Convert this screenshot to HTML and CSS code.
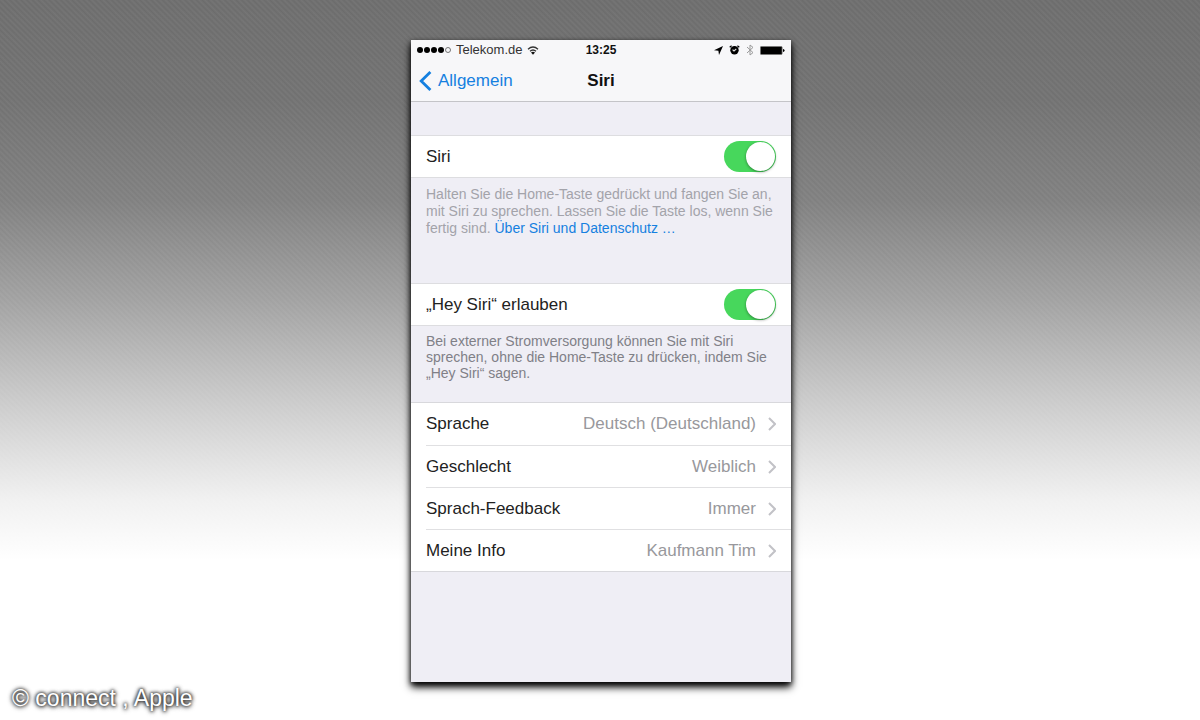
FILE: index.html
```html
<!DOCTYPE html>
<html lang="de">
<head>
    <meta charset="utf-8">
    <title>Siri</title>
    <link rel="stylesheet" href="styles.css">
</head>
<body>
    <main class="phone">
        <header class="topbar">
            <div class="status">
                <div class="status-left">
                    <svg class="signal" width="35" height="8" viewBox="0 0 35 8">
                        <circle cx="3" cy="4" r="3"/>
                        <circle cx="10" cy="4" r="3"/>
                        <circle cx="17" cy="4" r="3"/>
                        <circle cx="24" cy="4" r="3"/>
                        <circle cx="31" cy="4" r="2.5" fill="none" stroke="#555" stroke-width=".8"/>
                    </svg>
                    <span class="carrier">Telekom.de</span>
                    <svg width="12" height="9" viewBox="0 0 12 9" fill="none" stroke="#333" stroke-width="1.3">
                        <path d="M1 3.2Q6 -1.2 11 3.2M3 5.3Q6 2.6 9 5.3"/>
                        <path d="M4 6.4Q6 5 8 6.4L6 8.8Z" fill="#111" stroke="none"/>
                    </svg>
                </div>
                <time class="clock">13:25</time>
                <div class="status-right">
                    <svg width="9" height="9" viewBox="0 0 9 9"><path d="M9 0L5 9L4.4 4.7L0 4.2Z"/></svg>
                    <svg width="11" height="10" viewBox="0 0 11 10">
                        <circle cx="5.5" cy="5.3" r="4.2"/>
                        <path d="M.7 2.2L2.6 .7M10.3 2.2L8.4 .7" stroke="#000" stroke-width="1.2"/>
                        <path d="M5 6L7.3 3.8M5 6L3.6 4.6" stroke="#ddd" stroke-width="1.1"/>
                    </svg>
                    <svg width="8" height="12" viewBox="0 0 8 12" fill="none" stroke="#999" stroke-width="1"><path d="M1 3L7 8.6L4 11V1L7 3.4L1 9"/></svg>
                    <svg width="25" height="9" viewBox="0 0 25 9">
                        <rect x=".4" y=".4" width="21.7" height="8.2" rx="1" fill="#000" stroke="#777" stroke-width=".8"/>
                        <path d="M23 3Q24.6 3.2 24.6 4.5T23 6Z"/>
                    </svg>
                </div>
            </div>
            <nav class="nav">
                <a class="back" href="#">
                    <svg width="13" height="20" viewBox="0 0 13 20" fill="none" stroke="#1580e0" stroke-width="2.8"><path d="M11.4 1L2.2 10L11.4 19"/></svg>
                    Allgemein
                </a>
                <h1>Siri</h1>
            </nav>
        </header>

        <section class="group">
            <div class="row">
                <label for="siri">Siri</label>
                <input class="switch" type="checkbox" id="siri" checked>
            </div>
            <p class="hint hint-light">Halten Sie die Home-Taste gedrückt und fangen Sie an, mit Siri zu sprechen. Lassen Sie die Taste los, wenn Sie fertig sind. <a href="#">Über Siri und Datenschutz …</a></p>
        </section>

        <section class="group">
            <div class="row">
                <label for="hey-siri">„Hey Siri“ erlauben</label>
                <input class="switch" type="checkbox" id="hey-siri" checked>
            </div>
            <p class="hint">Bei externer Stromversorgung können Sie mit Siri sprechen, ohne die Home-Taste zu drücken, indem Sie „Hey Siri“ sagen.</p>
        </section>

        <section class="list">
            <a class="item" href="#">
                <span>Sprache</span>
                <span class="value">Deutsch (Deutschland)</span>
                <svg class="chevron" width="8" height="14" viewBox="0 0 8 14"><path d="M1 1L7 7L1 13"/></svg>
            </a>
            <a class="item" href="#">
                <span>Geschlecht</span>
                <span class="value">Weiblich</span>
                <svg class="chevron" width="8" height="14" viewBox="0 0 8 14"><path d="M1 1L7 7L1 13"/></svg>
            </a>
            <a class="item" href="#">
                <span>Sprach-Feedback</span>
                <span class="value">Immer</span>
                <svg class="chevron" width="8" height="14" viewBox="0 0 8 14"><path d="M1 1L7 7L1 13"/></svg>
            </a>
            <a class="item" href="#">
                <span>Meine Info</span>
                <span class="value">Kaufmann Tim</span>
                <svg class="chevron" width="8" height="14" viewBox="0 0 8 14"><path d="M1 1L7 7L1 13"/></svg>
            </a>
        </section>
    </main>
    <div class="credit">© connect , Apple</div>
</body>
</html>
```
FILE: styles.css
```css
* {
    box-sizing: border-box;
}
body {
    margin: 0;
    min-height: 100vh;
    padding: 40px 0 38px 2px;
    font-family: "Liberation Sans", Arial, sans-serif;
    font-size: 17px;
    color: #222;
    /* fine diagonal weave that fades out with the grey */
    background:
        linear-gradient(rgba(255,255,255,0) 0, rgba(255,255,255,0.03) 100px, rgba(255,255,255,0.13) 200px, rgba(255,255,255,0.36) 300px, rgba(255,255,255,0.64) 400px, rgba(255,255,255,0.9) 500px, #fff 560px),
        repeating-linear-gradient(45deg, #6c6c6c 0, #757575 2px, #6c6c6c 4px);
}
a {
    color: #1580e0;
    text-decoration: none;
}
.phone {
    width: 380px;
    max-width: 100%;
    min-height: 642px;
    margin: 0 auto;
    background: #efeef5;
    box-shadow: 0 5px 8px #000, 0 2px 5px rgba(0,0,0,0.7);
}

/* status bar and navigation */
.topbar {
    background: #f7f7f9;
    border-bottom: 1px solid #c4c4c8;
}
.status {
    display: grid;
    grid-template-columns: 1fr auto 1fr;
    align-items: center;
    height: 20px;
    padding: 0 6px;
    font-size: 12px;
    color: #111;
}
.status-left,
.status-right {
    display: flex;
    align-items: center;
}
.status-right {
    justify-content: flex-end;
    gap: 6px;
}
.carrier {
    margin: 0 5px 0 4px;
    font-size: 13px;
    line-height: 16px;
    color: #333;
}
.clock {
    font-weight: bold;
}
.nav {
    display: grid;
    grid-template-columns: 1fr auto 1fr;
    align-items: center;
    height: 41px;
    padding: 0 8px;
}
.back {
    display: flex;
    align-items: center;
    gap: 6px;
}
.nav h1 {
    margin: 0;
    font-size: 17px;
    color: #111;
}

/* switches with their explanation */
.group {
    height: 148px;
    padding-top: 33px;
}
.row {
    display: flex;
    align-items: center;
    justify-content: space-between;
    height: 43px;
    padding: 0 15px;
    background: #fff;
    border-top: 1px solid #dddde0;
    border-bottom: 1px solid #dddde0;
}
.switch {
    appearance: none;
    width: 52px;
    height: 31px;
    margin: 0;
    border-radius: 16px;
    background: #47d75c;
}
.switch::before {
    content: "";
    display: block;
    width: 29px;
    height: 29px;
    margin: 1px 1px 1px 22px;
    border-radius: 50%;
    background: #fff;
    box-shadow: 0 1px 3px rgba(0,0,0,0.4);
}
.hint {
    margin: 0;
    padding: 7px 15px;
    font-size: 14px;
    line-height: 16px;
    color: #808087;
}
.hint-light {
    padding-top: 8px;
    line-height: 17px;
    color: #a3a3aa;
}

/* detail rows */
.list {
    margin-top: 4px;
    background: #fff;
    border-top: 1px solid #d8d8dc;
    border-bottom: 1px solid #d8d8dc;
}
.item {
    display: flex;
    align-items: center;
    height: 42px;
    margin-left: 15px;
    padding-right: 15px;
    color: #222;
}
.item + .item {
    border-top: 1px solid #e0e0e2;
}
.value {
    margin-left: auto;
    color: #98989c;
}
.chevron {
    margin-left: 12px;
    fill: none;
    stroke: #c2c2c7;
    stroke-width: 2;
}

.credit {
    position: absolute;
    left: 12px;
    bottom: 8px;
    font-size: 23px;
    line-height: 27px;
    color: #fff;
    text-shadow: 0 0 3px #222, 0 0 4px #333, 0 1px 5px #555;
}
```
